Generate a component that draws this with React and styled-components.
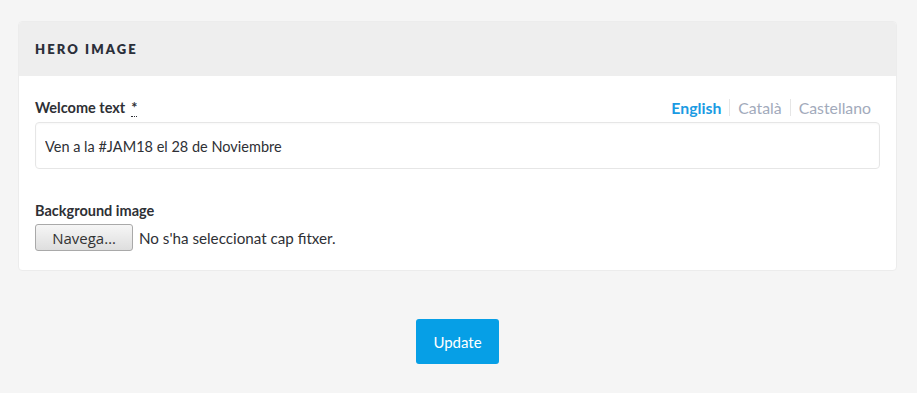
import styled, { createGlobalStyle } from "styled-components";

const GlobalStyle = createGlobalStyle`
body {
  margin: 0;
  background: #f5f5f5;
  font-family: Lato, "Noto Sans", sans-serif;
  color: #2e3035;
}
`

const Page = styled.div`
padding: 21px 20px 0 18px;
display: flex;
flex-direction: column;
`
const Card = styled.div`
background: #fff;
border: 1px solid #ececec;
border-radius: 4px;
overflow: hidden;
`
const CardHeader = styled.div`
background: #eeeeee;
height: 54px;
display: flex;
align-items: center;
padding: 0 16px;
font-size: 13px;
font-weight: 800;
letter-spacing: 2.1px;
text-transform: uppercase;
color: #2b2f3a;
`
const CardBody = styled.div`
padding: 20px 16px 19px 16px;
display: flex;
flex-direction: column;
`
const Field = styled.div`
display: flex;
flex-direction: column;
margin-bottom: ${p => p.gap || 0}px;
`
const LabelRow = styled.div`
display: flex;
justify-content: space-between;
align-items: flex-end;
height: 20px;
margin-bottom: ${p => p.tight ? 5 : 6}px;
`
const Label = styled.label`
font-size: 14.5px;
font-weight: 700;
color: #2e3035;
`
const Required = styled.abbr`
margin-left: 6px;
text-decoration: none;
border-bottom: 1px dotted #2e3035;
`
const Langs = styled.div`
display: flex;
align-items: center;
font-size: 15.8px;
margin-right: 9px;
`
const Lang = styled.span`
color: ${p => (p.active ? "#1a9be3" : "#a2aabb")};
font-weight: ${p => (p.active ? 700 : 400)};
padding: 0 8px;
border-left: ${p => (p.first ? "none" : "1px solid #e6e6e6")};
line-height: 17px;
&:last-child { padding-right: 0; }
`
const TextInput = styled.input`
box-sizing: border-box;
width: 100%;
height: 47px;
border: 1px solid #e6e6e6;
border-radius: 4px;
box-shadow: inset 0 1px 2px rgba(0,0,0,0.03);
padding: 2px 9px 0;
font-family: Lato, "Noto Sans", sans-serif;
font-size: 14.5px;
color: #2e3035;
outline: none;
`
const FileRow = styled.div`
display: flex;
align-items: center;
gap: 6px;
`
const FileButton = styled.button`
height: 27px;
width: 98px;
border: 1px solid #a9a9a9;
border-radius: 3px;
background: linear-gradient(#f6f6f6, #dedede);
font-family: "Open Sans", "DejaVu Sans", sans-serif;
font-size: 15px;
color: #333;
padding: 0;
`
const FileName = styled.span`
font-size: 15.2px;
color: #2e3035;
`
const Actions = styled.div`
display: flex;
justify-content: center;
margin-top: 48px;
`
const Submit = styled.button`
width: 83px;
height: 45px;
border: none;
border-radius: 3px;
background: #069fe6;
color: #fff;
font-family: Lato, "Noto Sans", sans-serif;
font-size: 15px;
`

export default function App() {
  return (
    <>
      <GlobalStyle />
      <Page>
        <Card>
          <CardHeader>Hero image</CardHeader>
          <CardBody>
            <Field gap={30}>
              <LabelRow>
                <Label>Welcome text<Required title="required">*</Required></Label>
                <Langs>
                  <Lang active first>English</Lang>
                  <Lang>Català</Lang>
                  <Lang>Castellano</Lang>
                </Langs>
              </LabelRow>
              <TextInput defaultValue="Ven a la #JAM18 el 28 de Noviembre" />
            </Field>
            <Field>
              <LabelRow tight><Label>Background image</Label></LabelRow>
              <FileRow>
                <FileButton>Navega…</FileButton>
                <FileName>No s'ha seleccionat cap fitxer.</FileName>
              </FileRow>
            </Field>
          </CardBody>
        </Card>
        <Actions>
          <Submit>Update</Submit>
        </Actions>
      </Page>
    </>
  );
}
